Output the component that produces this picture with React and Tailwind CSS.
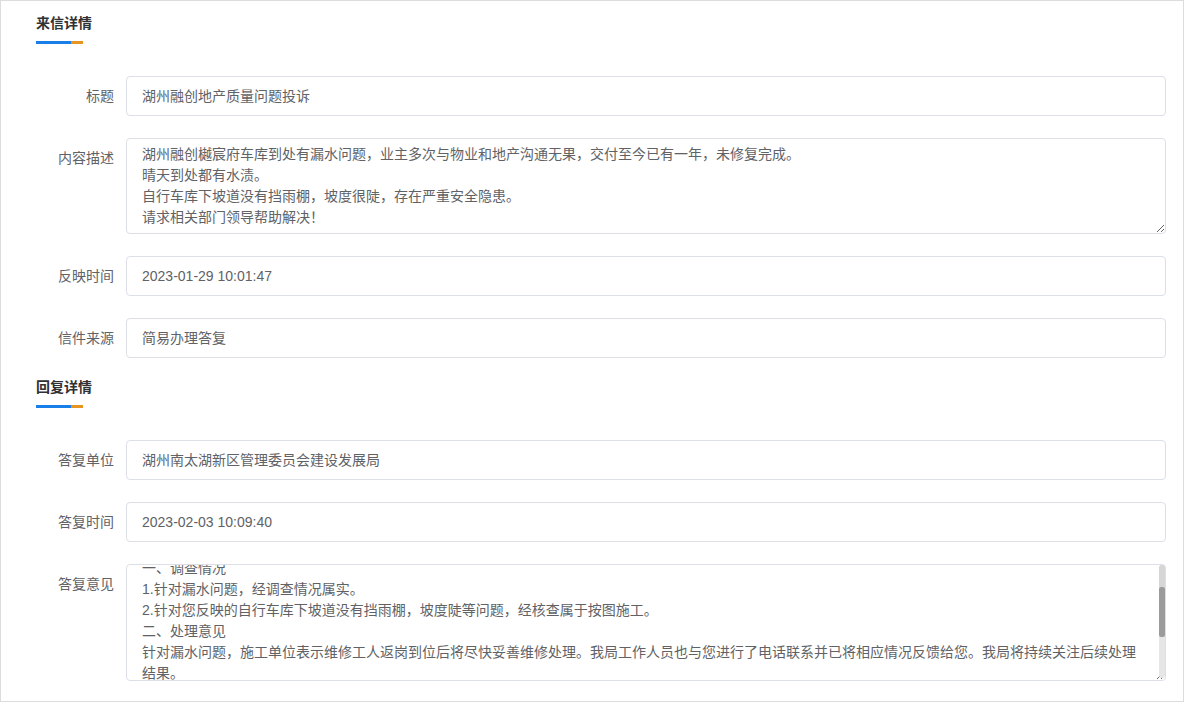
import React, { useEffect, useRef } from 'react';

const FONT = { fontFamily: '"Liberation Sans", "Noto Sans CJK SC", sans-serif' };

const desc = `湖州融创樾宸府车库到处有漏水问题，业主多次与物业和地产沟通无果，交付至今已有一年，未修复完成。
晴天到处都有水渍。
自行车库下坡道没有挡雨棚，坡度很陡，存在严重安全隐患。
请求相关部门领导帮助解决！`;

const reply = `一、调查情况
1.针对漏水问题，经调查情况属实。
2.针对您反映的自行车库下坡道没有挡雨棚，坡度陡等问题，经核查属于按图施工。
二、处理意见
针对漏水问题，施工单位表示维修工人返岗到位后将尽快妥善维修处理。我局工作人员也与您进行了电话联系并已将相应情况反馈给您。我局将持续关注后续处理结果。
如您对答复内容仍有疑问，可再次来信反映。
感谢您对我局工作的理解与支持！`;

const SectionTitle = ({ children, className = '' }) => (
  <div className={className}>
    <div className="h-[20px] leading-[20px] text-[14px] font-bold text-[#303133]">{children}</div>
    <div className="flex mt-[8px] h-[3px]">
      <div className="w-[35px] bg-[#1a7ee9]"></div>
      <div className="w-[12px] bg-[#e6961d]"></div>
    </div>
  </div>
);

const Row = ({ label, children }) => (
  <div className="flex">
    <div className="w-[90px] shrink-0 pr-[12px] text-right leading-[40px] text-[14px] text-[#606266]">{label}</div>
    <div className="flex-1">{children}</div>
  </div>
);

const Input = ({ value }) => (
  <div className="h-[40px] leading-[38px] border border-[#dcdfe6] rounded-[4px] px-[15px] text-[14px] text-[#606266] bg-white">{value}</div>
);

const App = () => {
  const replyRef = useRef(null);

  useEffect(() => {
    if (replyRef.current) replyRef.current.scrollTop = 12;
  }, []);

  return (
    <div className="w-[1184px] h-[702px] border border-[#dcdcdc] bg-white pl-[35px] pr-[17px] pt-[12px] overflow-hidden" style={FONT}>
      <SectionTitle>来信详情</SectionTitle>
      <div className="mt-[32px] flex flex-col gap-[22px]">
        <Row label="标题"><Input value="湖州融创地产质量问题投诉" /></Row>
        <Row label="内容描述">
          <textarea
            readOnly
            value={desc}
            className="block w-full h-[96px] border border-[#dcdfe6] rounded-[4px] px-[15px] py-[5px] text-[14px] leading-[21px] text-[#606266] outline-none"
            style={FONT}
          />
        </Row>
        <Row label="反映时间"><Input value="2023-01-29 10:01:47" /></Row>
        <Row label="信件来源"><Input value="简易办理答复" /></Row>
      </div>
      <SectionTitle className="mt-[19px]">回复详情</SectionTitle>
      <div className="mt-[32px] flex flex-col gap-[22px]">
        <Row label="答复单位"><Input value="湖州南太湖新区管理委员会建设发展局" /></Row>
        <Row label="答复时间"><Input value="2023-02-03 10:09:40" /></Row>
        <Row label="答复意见">
          <div className="relative">
            <textarea
              ref={replyRef}
              readOnly
              value={reply}
              className="block w-full h-[117px] border border-[#dcdfe6] rounded-[4px] pl-[15px] pr-[24px] py-[5px] text-[14px] leading-[21px] text-[#606266] outline-none overflow-y-scroll"
              style={FONT}
            />
            {/* scrollbar as drawn by the source browser */}
            <div className="absolute right-[1px] top-[1px] bottom-[3px] w-[6px] flex flex-col bg-[#e6e6e6] rounded-[3px] pointer-events-none">
              <div className="h-[22px] bg-[#d6d6d6] rounded-t-[3px]"></div>
              <div className="h-[50px] bg-[#9b9b9b] rounded-[2px]"></div>
              <div className="flex-1"></div>
            </div>
          </div>
        </Row>
      </div>
    </div>
  );
};

export default App;
